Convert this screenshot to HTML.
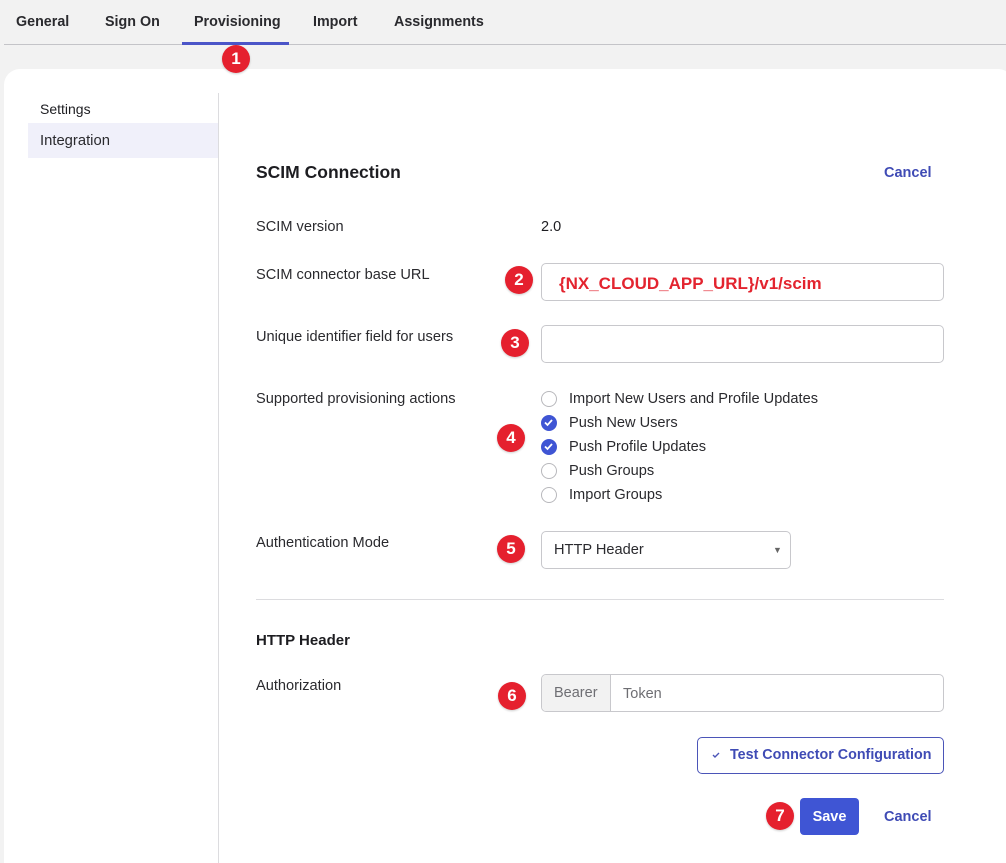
<!DOCTYPE html>
<html><head><meta charset="utf-8"><style>
*{margin:0;padding:0;box-sizing:border-box}
html,body{width:1006px;height:863px;overflow:hidden}
body{background:#f2f2f2;font-family:"Liberation Sans",sans-serif;color:#1d1d21;font-size:14.5px;position:relative}
.a{position:absolute;white-space:nowrap}
.tab{position:absolute;top:14px;font-size:14.3px;font-weight:bold;color:#2a2a2e}
.badge{position:absolute;width:28px;height:28px;border-radius:50%;background:#e5202e;color:#fff;font-weight:bold;font-size:17px;text-align:center;line-height:28px;box-shadow:0 1px 2px rgba(0,0,0,.2)}
.lbl{position:absolute;left:256px;font-size:14.6px;color:#2a2a2e}
.inp{position:absolute;border:1px solid #c8c8cc;border-radius:5px;background:#fff}
.cb{position:absolute;left:541px;width:16px;height:16px;border:1.5px solid #b8b8bc;border-radius:50%;background:#fff}
.cb.on{background:#3f55d4;border-color:#3f55d4}
.cbt{position:absolute;left:569px;font-size:14.6px;color:#2a2a2e}
</style></head><body>
<div class="tab" style="left:16px">General</div>
<div class="tab" style="left:105px">Sign On</div>
<div class="tab" style="left:194px">Provisioning</div>
<div class="tab" style="left:313px">Import</div>
<div class="tab" style="left:394px">Assignments</div>
<div class="a" style="left:4px;top:44px;width:1002px;height:1px;background:#c4c4c8"></div>
<div class="a" style="left:182px;top:42px;width:107px;height:3px;background:#4b55c8"></div>
<div class="a" style="left:4px;top:69px;width:1010px;height:820px;background:#fff;border-radius:16px"></div>
<div class="badge" style="left:222px;top:45px">1</div>
<div class="a" style="left:218px;top:93px;width:1px;height:770px;background:#dcdcdf"></div>
<div class="a" style="left:40px;top:101px;font-size:14px;color:#1d1d21">Settings</div>
<div class="a" style="left:28px;top:123px;width:190px;height:35px;background:#f0f0fa"></div>
<div class="a" style="left:40px;top:133px;font-size:14.8px;color:#2a2a2e">Integration</div>
<div class="a" style="left:256px;top:162px;font-size:17.5px;font-weight:bold;color:#1d1d21">SCIM Connection</div>
<div class="a" style="left:884px;top:165px;font-size:14.5px;font-weight:bold;color:#3f4bb5">Cancel</div>
<div class="lbl" style="top:219px">SCIM version</div>
<div class="a" style="left:541px;top:219px;font-size:14.5px">2.0</div>
<div class="lbl" style="top:267px">SCIM connector base URL</div>
<div class="badge" style="left:505px;top:266px">2</div>
<div class="inp" style="left:541px;top:263px;width:403px;height:38px"></div>
<div class="a" style="left:559px;top:274px;font-size:17px;font-weight:bold;color:#e3242f">{NX_CLOUD_APP_URL}/v1/scim</div>
<div class="lbl" style="top:329px">Unique identifier field for users</div>
<div class="badge" style="left:501px;top:329px">3</div>
<div class="inp" style="left:541px;top:325px;width:403px;height:38px"></div>
<div class="lbl" style="top:391px">Supported provisioning actions</div>
<div class="badge" style="left:497px;top:424px">4</div>
<div class="cb" style="top:391px"></div><div class="cbt" style="top:391px">Import New Users and Profile Updates</div>
<div class="cb on" style="top:415px"><svg width="13" height="13" viewBox="0 0 13 13" style="position:absolute;left:0;top:0"><path d="M3 6.5l2.5 2.5 4.5-5" stroke="#fff" stroke-width="1.8" fill="none"/></svg></div><div class="cbt" style="top:415px">Push New Users</div>
<div class="cb on" style="top:439px"><svg width="13" height="13" viewBox="0 0 13 13" style="position:absolute;left:0;top:0"><path d="M3 6.5l2.5 2.5 4.5-5" stroke="#fff" stroke-width="1.8" fill="none"/></svg></div><div class="cbt" style="top:439px">Push Profile Updates</div>
<div class="cb" style="top:463px"></div><div class="cbt" style="top:463px">Push Groups</div>
<div class="cb" style="top:487px"></div><div class="cbt" style="top:487px">Import Groups</div>
<div class="lbl" style="top:535px">Authentication Mode</div>
<div class="badge" style="left:497px;top:535px">5</div>
<div class="inp" style="left:541px;top:531px;width:250px;height:38px"></div>
<div class="a" style="left:554px;top:542px;font-size:14.6px;color:#2a2a2e">HTTP Header</div>
<div class="a" style="left:773px;top:545px;font-size:9px;color:#666">▼</div>
<div class="a" style="left:256px;top:599px;width:688px;height:1px;background:#dcdcdf"></div>
<div class="a" style="left:256px;top:632px;font-size:15px;font-weight:bold;color:#1d1d21">HTTP Header</div>
<div class="lbl" style="top:678px">Authorization</div>
<div class="badge" style="left:498px;top:682px">6</div>
<div class="inp" style="left:541px;top:674px;width:403px;height:38px;overflow:hidden"><div style="position:absolute;left:0;top:0;width:69px;height:36px;background:#f2f2f2;border-right:1px solid #c8c8cc"></div></div>
<div class="a" style="left:554px;top:685px;font-size:14.5px;color:#6e6e73">Bearer</div>
<div class="a" style="left:623px;top:686px;font-size:14.5px;color:#6e6e73">Token</div>
<div class="a" style="left:697px;top:737px;width:247px;height:37px;border:1px solid #4b55b8;border-radius:5px"></div>
<svg class="a" style="left:711px;top:751px" width="10" height="8" viewBox="0 0 10 8"><path d="M2 4l2 2 4-4" stroke="#4b55b8" stroke-width="1.4" fill="none"/></svg>
<div class="a" style="left:730px;top:747px;font-size:14.3px;font-weight:bold;color:#3f4bb5">Test Connector Configuration</div>
<div class="badge" style="left:766px;top:802px">7</div>
<div class="a" style="left:800px;top:798px;width:59px;height:37px;background:#3f55d4;border-radius:4px;color:#fff;font-weight:bold;font-size:14.5px;text-align:center;line-height:38px">Save</div>
<div class="a" style="left:884px;top:809px;font-size:14.5px;font-weight:bold;color:#3f4bb5">Cancel</div>
</body></html>
